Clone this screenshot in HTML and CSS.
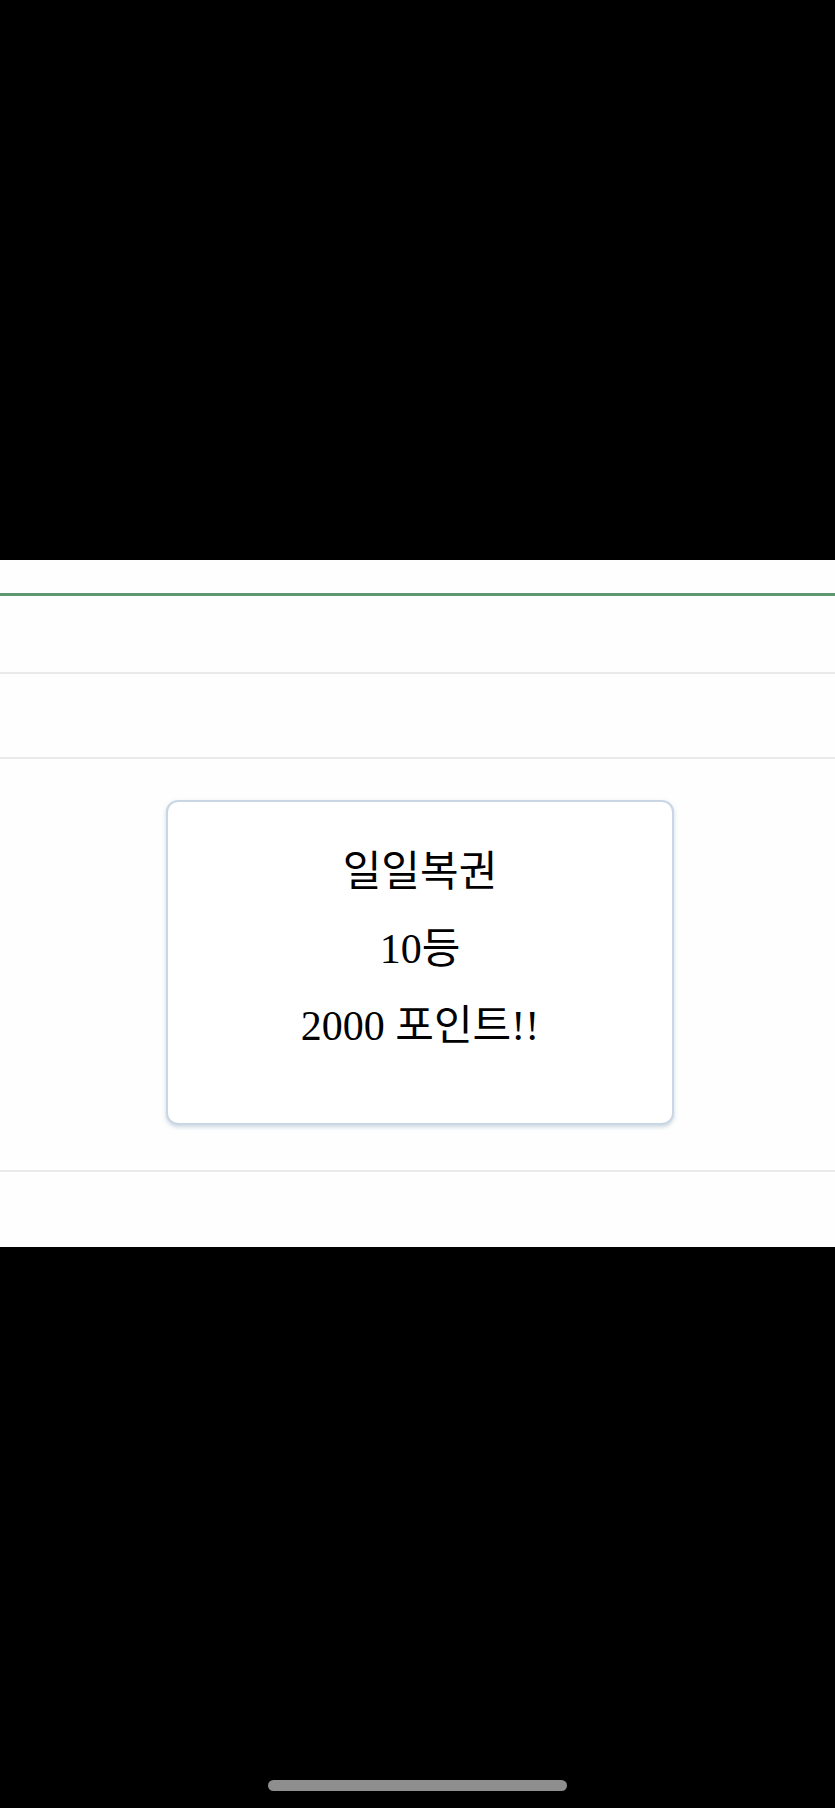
FILE: index.html
```html
<!DOCTYPE html>
<html lang="ko">
<head>
    <meta charset="UTF-8">
    <meta name="viewport" content="width=device-width, initial-scale=1.0">
    <title>일일복권</title>
    <link rel="stylesheet" href="styles.css">
</head>
<body>
    <div class="screen-top"></div>

    <div class="sheet">
        <div class="tab-bar"></div>
        <div class="row"></div>
        <div class="row row-empty"></div>

        <div class="prize-area">
            <div class="prize-card">
                <p class="prize-line">일일복권</p>
                <p class="prize-line">10등</p>
                <p class="prize-line">2000 포인트!!</p>
            </div>
        </div>

        <div class="sheet-bottom"></div>
    </div>

    <div class="screen-bottom">
        <div class="home-indicator"></div>
    </div>
</body>
</html>
```

FILE: styles.css
```css
body {
    margin: 0;
    background-color: #000;
    font-family: "Liberation Serif", "Noto Sans CJK KR", serif;
}

.screen-top {
    height: 560px;
}

.sheet {
    background-color: #fefefe;
}

.tab-bar {
    height: 33px;
    border-bottom: 3px solid #5f9870;
}

.row {
    height: 76px;
    border-bottom: 2px solid #e8eaeb;
}

.row-empty {
    height: 83px;
}

.prize-area {
    padding: 41px 0 45px 5px;
    border-bottom: 2px solid #e8eaeb;
    display: flex;
    justify-content: center;
}

.prize-card {
    width: 508px;
    height: 325px;
    box-sizing: border-box;
    border: 2px solid #c9d6e4;
    border-radius: 12px;
    box-shadow: 0 2px 4px rgba(110, 140, 170, 0.35);
    background-color: #fff;
    padding-top: 32px;
    text-align: center;
    color: #000;
}

.prize-line {
    margin: 0;
    font-size: 42px;
    line-height: 77px;
}

.sheet-bottom {
    height: 75px;
}

.screen-bottom {
    height: 561px;
    display: flex;
    justify-content: center;
    align-items: flex-end;
}

.home-indicator {
    width: 299px;
    height: 11px;
    border-radius: 6px;
    background-color: #8e8e8e;
    margin-bottom: 17px;
}
```
